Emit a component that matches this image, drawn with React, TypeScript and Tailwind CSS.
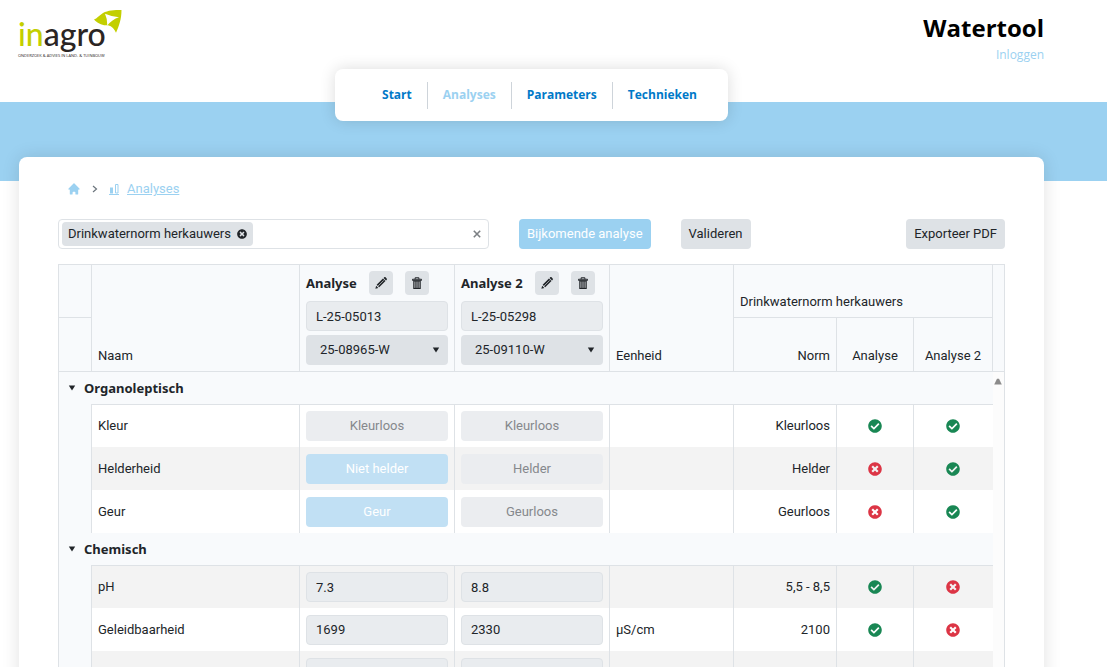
import { useState } from "react";
import clsx from "clsx";
import { FaCheckCircle, FaTimesCircle } from "react-icons/fa";
import { HiHome } from "react-icons/hi";

type Cell = { kind: "choice" | "value"; text: string; active?: boolean; ok?: boolean };

interface Row {
  name: string;
  unit?: string;
  norm: string;
  cells: Cell[];
  striped?: boolean;
}

interface Group {
  title: string;
  rows: Row[];
}

const NAV = ["Start", "Analyses", "Parameters", "Technieken"];

const ANALYSES = [
  { title: "Analyse", lab: "L-25-05013", sample: "25-08965-W" },
  { title: "Analyse 2", lab: "L-25-05298", sample: "25-09110-W" },
];

const GROUPS: Group[] = [
  {
    title: "Organoleptisch",
    rows: [
      {
        name: "Kleur",
        norm: "Kleurloos",
        cells: [
          { kind: "choice", text: "Kleurloos", ok: true },
          { kind: "choice", text: "Kleurloos", ok: true },
        ],
      },
      {
        name: "Helderheid",
        norm: "Helder",
        striped: true,
        cells: [
          { kind: "choice", text: "Niet helder", active: true, ok: false },
          { kind: "choice", text: "Helder", ok: true },
        ],
      },
      {
        name: "Geur",
        norm: "Geurloos",
        cells: [
          { kind: "choice", text: "Geur", active: true, ok: false },
          { kind: "choice", text: "Geurloos", ok: true },
        ],
      },
    ],
  },
  {
    title: "Chemisch",
    rows: [
      {
        name: "pH",
        norm: "5,5 - 8,5",
        striped: true,
        cells: [
          { kind: "value", text: "7.3", ok: true },
          { kind: "value", text: "8.8", ok: false },
        ],
      },
      {
        name: "Geleidbaarheid",
        unit: "µS/cm",
        norm: "2100",
        cells: [
          { kind: "value", text: "1699", ok: true },
          { kind: "value", text: "2330", ok: false },
        ],
      },
      {
        name: "",
        norm: "",
        striped: true,
        cells: [
          { kind: "value", text: "" },
          { kind: "value", text: "" },
        ],
      },
    ],
  },
];

function Logo() {
  return (
    <div className="relative w-[104px] pt-[5px] text-[#2b2523]">
      <div className="font-[Lato,sans-serif] text-[32px] leading-[38px] font-medium">
        <span className="text-[#c3cf00]">in</span>agro
      </div>
      <div className="font-['Open_Sans',sans-serif] text-[4px] leading-[6px] whitespace-nowrap">
        ONDERZOEK &amp; ADVIES IN LAND- &amp; TUINBOUW
      </div>
      <svg className="absolute top-0 right-0 h-6 w-7" viewBox="0 0 28 24" aria-hidden="true">
        <path d="M0 9.500C3 8.500 5 5.500 9 3C14 0.300 20 0 27.500 0C27.500 9 25 16 22 22.800C20.500 19 18 16 14 15.200C8 16 3.500 13 0 9.500Z" fill="#c3cf00" />
        <path d="M11 3.800Q17 6.500 25 7.300Q18 9.500 13.300 15.600Q13.500 9 11 3.800Z" fill="#fff" />
      </svg>
    </div>
  );
}

function PencilIcon() {
  return (
    <svg width="12" height="12" viewBox="0 0 16 16" fill="currentColor" aria-hidden="true">
      <path d="M0.500 15.500l1-4 3 3zM2.200 10.400l8.400-8.400 3.400 3.400-8.400 8.400zM11.400 1.300l.700-.700c.700-.700 1.600-.500 2.200.1l1 1c.600.600.800 1.500.1 2.200l-.700.700z" />
      <path d="M4.100 12l7.500-7.500" stroke="#dee2e6" strokeWidth="0.900" />
    </svg>
  );
}

function TrashIcon() {
  return (
    <svg width="12" height="12" viewBox="0 0 16 16" aria-hidden="true">
      <path d="M2 3h12v1.500H2zM5.500 3V1h5v2" fill="none" stroke="currentColor" strokeWidth="1.300" />
      <path d="M3 5h10v11H3z" fill="currentColor" />
      <path d="M5.200 6v8.500M8 6v8.500M10.800 6v8.500" stroke="#dee2e6" strokeWidth="1.100" />
    </svg>
  );
}

function ChartIcon() {
  return (
    <svg width="10" height="10" viewBox="0 0 10 10" aria-hidden="true">
      <path d="M1 3.500h3V9.500H1z" fill="currentColor" />
      <path d="M6.500 0.500h2.500v8.500h-2.500z" fill="none" stroke="currentColor" />
    </svg>
  );
}

function Caret({ className }: { className?: string }) {
  return (
    <svg className={className} width="8" height="6" viewBox="0 0 8 6" aria-hidden="true">
      <path d="M0.800 0.500h6.400L4 5.500z" fill="currentColor" />
    </svg>
  );
}

function Status({ ok }: { ok: boolean }) {
  return ok ? (
    <FaCheckCircle className="mx-auto size-[14px] text-[#198754]" />
  ) : (
    <FaTimesCircle className="mx-auto size-[14px] text-[#dc3545]" />
  );
}

function AnalyseHeader({ title, lab, sample }: { title: string; lab: string; sample: string }) {
  return (
    <div className="flex flex-col">
      <div className="mb-1.5 flex h-6 items-center gap-3">
        <span className="font-['Noto_Sans',sans-serif] font-bold">{title}</span>
        <button aria-label="Bewerken" className="flex size-6 items-center justify-center rounded bg-[#dee2e6]">
          <PencilIcon />
        </button>
        <button aria-label="Verwijderen" className="flex size-6 items-center justify-center rounded bg-[#dee2e6]">
          <TrashIcon />
        </button>
      </div>
      <input
        aria-label="Labonummer"
        readOnly
        value={lab}
        className="mb-1 h-[30px] w-full rounded border border-[#dee2e6] bg-[#e9ecef] px-[9px]"
      />
      <div className="relative">
        <select
          aria-label="Staal"
          className="h-[30px] w-full appearance-none rounded bg-[#dee2e6] px-[14px]"
        >
          <option>{sample}</option>
        </select>
        <Caret className="pointer-events-none absolute top-3 right-2" />
      </div>
    </div>
  );
}

function ResultCell({ cell, label }: { cell: Cell; label: string }) {
  if (cell.kind === "value") {
    return (
      <input
        aria-label={label}
        readOnly
        value={cell.text}
        className="block h-[30px] w-full rounded border border-[#dee2e6] bg-[#e9ecef] px-[9px]"
      />
    );
  }
  return (
    <button
      className={clsx(
        "block h-[30px] w-full rounded",
        cell.active ? "bg-[#c1e0f4] text-white" : "bg-[#ebedf0] text-[#85888c]"
      )}
    >
      {cell.text}
    </button>
  );
}

export default function App() {
  const [closed, setClosed] = useState<string[]>([]);

  const toggle = (title: string) =>
    setClosed((prev) => (prev.includes(title) ? prev.filter((t) => t !== title) : [...prev, title]));

  return (
    <div className="h-screen overflow-hidden bg-white font-[Roboto,sans-serif] text-[13px] leading-5 text-[#212529]">
      <header className="flex h-[102px] items-start justify-between pt-[10px] pr-[63px] pl-[18px]">
        <Logo />
        <div className="text-right font-['Open_Sans',sans-serif]">
          <h1 className="text-[24px] leading-9 font-bold text-black">Watertool</h1>
          <a href="#inloggen" className="block text-[12px] leading-[18px] text-[#9bd1f1]">
            Inloggen
          </a>
        </div>
      </header>

      <div className="flex h-[79px] justify-center bg-[#9bd1f1] pr-[63px] pl-[19px]">
        <nav className="relative -mt-[33px] flex h-[52px] items-center rounded-lg bg-white pr-4 pl-8 font-['Open_Sans',sans-serif] font-bold shadow-[0_0_16px_rgba(0,0,0,0.14)]">
          {NAV.map((item, i) => (
            <a
              key={item}
              href={`#${item.toLowerCase()}`}
              className={clsx(
                "flex h-[27px] items-center px-[15px] text-[12px]",
                i > 0 && "border-l border-[#ced4da]",
                item === "Analyses" ? "text-[#9bd1f1]" : "text-[#0079c8]"
              )}
            >
              {item}
            </a>
          ))}
        </nav>
      </div>

      <main className="relative -mt-6 mr-[63px] ml-[19px] rounded-lg bg-white px-[39px] pt-[22px] pb-10 shadow-[0_0_18px_rgba(0,0,0,0.12)]">
        {/* Breadcrumb */}
        <div className="mb-5 flex items-center text-[#9bd1f1]">
          <a href="#start" aria-label="Start" className="ml-[9px]">
            <HiHome className="size-[14px]" />
          </a>
          <svg className="mx-[11px] text-[#6c757d]" width="6" height="8" viewBox="0 0 6 8" aria-hidden="true">
            <path d="M1 1l3.500 3L1 7" fill="none" stroke="currentColor" strokeWidth="1.200" />
          </svg>
          <a href="#analyses" className="flex items-center gap-2">
            <span className="border-b border-current">
              <ChartIcon />
            </span>
            <span className="underline">Analyses</span>
          </a>
        </div>

        {/* Toolbar */}
        <div className="mb-[15px] flex h-[30px] items-stretch gap-[30px]">
          <div className="flex max-w-[431px] flex-1 items-center justify-between rounded border border-[#dee2e6] px-[3px]">
            <span className="flex h-6 items-center gap-[6px] rounded bg-[#dee2e6] px-[6px]">
              Drinkwaternorm herkauwers
              <button aria-label="Norm verwijderen">
                <FaTimesCircle className="size-[10px]" />
              </button>
            </span>
            <button aria-label="Alles wissen" className="mr-1 text-[#7c8084]">
              <svg width="8" height="8" viewBox="0 0 8 8" aria-hidden="true">
                <path d="M0.800 0.800l6.400 6.400M7.200 0.800L0.800 7.200" stroke="currentColor" strokeWidth="1.600" />
              </svg>
            </button>
          </div>
          <button className="rounded bg-[#9bd1f1] px-2 text-white">Bijkomende analyse</button>
          <button className="rounded bg-[#dee2e6] px-2">Valideren</button>
          <button className="ml-auto rounded bg-[#dee2e6] px-2">Exporteer PDF</button>
        </div>

        <table className="w-full table-fixed border-separate border-spacing-0">
          <colgroup>
            <col className="w-[34px]" />
            <col />
            <col className="w-[155px]" />
            <col className="w-[155px]" />
            <col className="w-[124px]" />
            <col className="w-[103px]" />
            <col className="w-[77px]" />
            <col className="w-[79px]" />
            <col className="w-3" />
          </colgroup>
          <thead className="bg-[#f8fafc] text-left *:*:border-r *:*:border-b *:*:border-[#dee2e6] *:*:px-1.5 *:*:align-bottom *:*:font-normal">
            <tr className="h-[54px] *:border-t">
              <th className="border-l" />
              <th rowSpan={2} className="pb-[5px]">Naam</th>
              {ANALYSES.map((a) => (
                <th key={a.title} rowSpan={2} className="pt-1.5 pb-1.5">
                  <AnalyseHeader {...a} />
                </th>
              ))}
              <th rowSpan={2} className="pb-[5px]">Eenheid</th>
              <th colSpan={3} className="pb-[5px]">Drinkwaternorm herkauwers</th>
              <th rowSpan={2} />
            </tr>
            <tr className="h-[54px]">
              <th className="border-l" />
              <th className="pb-[5px] text-right">Norm</th>
              {ANALYSES.map((a) => (
                <th key={a.title} className="pb-[5px] text-center">{a.title}</th>
              ))}
            </tr>
          </thead>
          {GROUPS.map((group, g) => (
            <tbody key={group.title}>
              <tr className="h-8">
                <td colSpan={8} className="border-l border-[#dee2e6] bg-[#f8fafc] pl-[9px]">
                  <button
                    className="flex items-center gap-2 font-['Noto_Sans',sans-serif] font-bold"
                    onClick={() => toggle(group.title)}
                  >
                    <Caret />
                    {group.title}
                  </button>
                </td>
                <td className="border-r border-[#dee2e6] bg-[#fcfcfc] align-top">
                  {g === 0 && (
                    <svg className="mt-1.5 ml-px" width="8" height="7" viewBox="0 0 8 7" aria-hidden="true">
                      <path d="M3 0.800h2L7.800 6.500H0.200z" fill="#8b8b8b" />
                    </svg>
                  )}
                </td>
              </tr>
              {!closed.includes(group.title) &&
                group.rows.map((row, i) => {
                  const cellClass = clsx(
                    "border-[#dee2e6] px-1.5 border-r",
                    i === 0 && "border-t",
                    row.striped ? "bg-[#f3f3f3]" : "bg-white"
                  );
                  return (
                    <tr key={row.name} className="h-[43px]">
                      <td className="border-x border-[#dee2e6] bg-[#f8fafc]" />
                      <td className={cellClass}>{row.name}</td>
                      {row.cells.map((cell, c) => (
                        <td key={c} className={cellClass}>
                          <ResultCell cell={cell} label={`${row.name} ${ANALYSES[c].title}`} />
                        </td>
                      ))}
                      <td className={cellClass}>{row.unit}</td>
                      <td className={clsx(cellClass, "text-right")}>{row.norm}</td>
                      {row.cells.map((cell, c) => (
                        <td key={c} className={clsx(cellClass, c === 1 && "border-r-0")}>
                          {cell.ok !== undefined && <Status ok={cell.ok} />}
                        </td>
                      ))}
                      <td className="border-r border-[#dee2e6] bg-[#fcfcfc]" />
                    </tr>
                  );
                })}
            </tbody>
          ))}
        </table>
      </main>
    </div>
  );
}
